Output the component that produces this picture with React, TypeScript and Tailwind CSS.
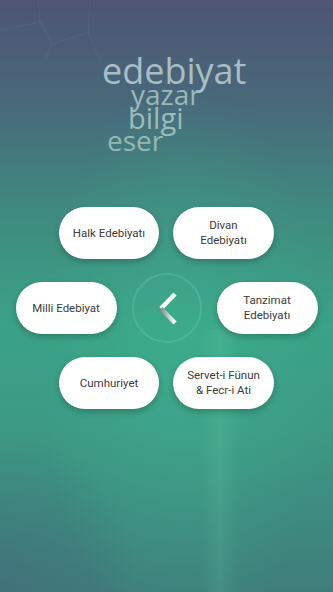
import React from "react";

const Pill = ({ children, className = "" }: { children: React.ReactNode; className?: string }) => (
  <button
    className={`h-[52px] rounded-full bg-white shadow-[0_3px_6px_rgba(0,0,0,0.22)] flex items-center justify-center text-center text-[11.5px] leading-[15px] text-[#3b3b3b] ${className}`}
    style={{ fontFamily: "Roboto, 'Noto Sans', sans-serif" }}
  >
    {children}
  </button>
);

const Chevron = () => (
  <svg width="22" height="33" viewBox="0 0 22 33">
    <defs>
      <linearGradient id="lower" x1="0" y1="0" x2="1" y2="0">
        <stop offset="0" stopColor="#7d8f8c" />
        <stop offset="1" stopColor="#ffffff" />
      </linearGradient>
    </defs>
    <path d="M19 2 L5 16.5" stroke="#f4f7f6" strokeWidth="4.5" strokeLinecap="butt" fill="none" />
    <path d="M5 16.5 L19 31" stroke="url(#lower)" strokeWidth="4.5" strokeLinecap="butt" fill="none" />
  </svg>
);

export default function App() {
  return (
    <div className="relative w-full h-[592px] overflow-hidden bg-[linear-gradient(180deg,#4d5573_0%,#49687a_17%,#40897f_35%,#3aa286_55%,#3c9a84_72%,#3f7d7b_100%)]">
      {/* background glows */}
      <div className="absolute inset-0 bg-[radial-gradient(ellipse_at_55%_62%,rgba(64,190,150,0.35)_0%,rgba(64,190,150,0)_55%)]" />
      <div className="absolute left-[200px] top-[330px] w-[40px] h-[262px] bg-[linear-gradient(90deg,rgba(120,220,180,0)_0%,rgba(120,220,180,0.14)_50%,rgba(120,220,180,0)_100%)]" />
      <div className="absolute left-0 bottom-0 w-[140px] h-[160px] bg-[radial-gradient(ellipse_at_0%_100%,rgba(70,90,120,0.35)_0%,rgba(70,90,120,0)_70%)]" />
      <svg className="absolute left-0 top-0" width="120" height="60" viewBox="0 0 120 60">
        <g stroke="rgba(170,170,210,0.12)" strokeWidth="0.8" fill="none">
          <path d="M0 30 L40 22 L52 44 L90 32" />
          <path d="M38 0 L40 22" />
          <path d="M90 0 L88 32 L100 60" />
          <path d="M52 44 L45 60" />
        </g>
      </svg>

      <div className="relative flex flex-col">
        {/* word cloud */}
        <div
          className="flex flex-col pt-[57px] h-[203px]"
          style={{ fontFamily: "'Open Sans', 'Noto Sans', sans-serif" }}
        >
          <div className="pl-[102px] text-[36px] leading-[28px] text-[#a6bfc5]">edebiyat</div>
          <div className="pl-[131px] text-[28px] leading-[18px] text-[#9ab8bb]">yazar</div>
          <div className="pl-[128px] mt-[6px] text-[29px] leading-[18px] text-[#9cbcbb]">bilgi</div>
          <div className="pl-[107px] mt-[4px] text-[28px] leading-[18px] text-[#94b8b4]">eser</div>
        </div>

        {/* menu */}
        <div className="flex flex-col items-center gap-[14px] mt-[4px]">
          <div className="flex gap-[14px]">
            <Pill className="w-[100px]">Halk Edebiyatı</Pill>
            <Pill className="w-[101px]">
              Divan
              <br />
              Edebiyatı
            </Pill>
          </div>
          <div className="flex items-center gap-[15px]">
            <Pill className="w-[101px]">Milli Edebiyat</Pill>
            <div className="w-[70px] h-[70px] rounded-full border-[2px] border-[rgba(140,230,200,0.2)] flex items-center justify-center">
              <Chevron />
            </div>
            <Pill className="w-[101px]">
              Tanzimat
              <br />
              Edebiyatı
            </Pill>
          </div>
          <div className="flex gap-[14px]">
            <Pill className="w-[100px]">Cumhuriyet</Pill>
            <Pill className="w-[101px]">
              Servet-i Fünun
              <br />
              &amp; Fecr-i Ati
            </Pill>
          </div>
        </div>
      </div>
    </div>
  );
}
